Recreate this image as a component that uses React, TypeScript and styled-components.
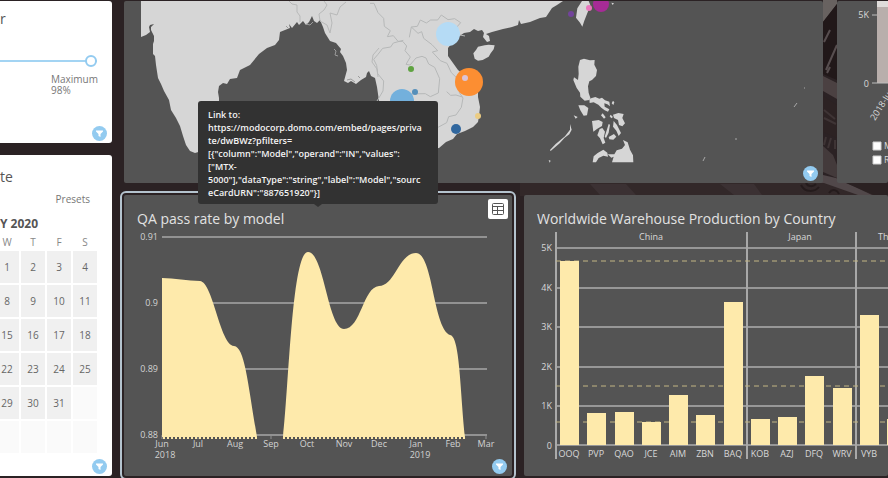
import React from "react";
import styled, { createGlobalStyle } from "styled-components";

const FONT = '"Open Sans", "Noto Sans", sans-serif';
const CREAM = "#feeaab";
const SLATE = "#545454";
const SKY = "#93cbf0";

const GlobalStyle = createGlobalStyle`
  *, *::before, *::after { box-sizing: border-box; }
  body { margin: 0; background: #2b2224; font-family: ${FONT}; overflow: hidden; }
`;

const Page = styled.main`
  position: relative;
  display: flex;
  gap: 12px;
  min-height: 100vh;
  padding: 1px 0 2px;
  background: #2b2224;
`;

const Backdrop = styled.svg`
  position: absolute;
  inset: 0;
  width: 100%;
  height: 100%;
`;

const Sidebar = styled.aside`
  position: relative;
  display: flex;
  flex-direction: column;
  gap: 12px;
  flex: 0 0 112px;
  overflow: hidden;
`;

const Board = styled.div`
  position: relative;
  display: flex;
  flex-direction: column;
  gap: 12px;
  flex: 1;
  min-width: 0;
`;

const Row = styled.div<{ $gap: number }>`
  display: flex;
  gap: ${(p) => p.$gap}px;
  align-items: flex-start;
`;

const Panel = styled.section<{ $grow: number; $selected?: boolean }>`
  position: relative;
  flex: ${(p) => p.$grow} 1 0;
  min-width: 0;
  background: ${SLATE};
  border-radius: 2px;
  outline: ${(p) => (p.$selected ? "2px solid #b4c3ce" : "none")};
  outline-offset: 2px;
`;

const PanelTitle = styled.h2`
  margin: 0;
  padding: 13px 0 0 13px;
  font-size: 14px;
  line-height: 22px;
  font-weight: 400;
  color: #e2e2e2;
  white-space: nowrap;
`;

const Chart = styled.svg`
  display: block;
  width: 100%;
  height: auto;
  font-family: ${FONT};
`;

const FilterCard = styled.section<{ $fill?: boolean }>`
  position: relative;
  flex: ${(p) => (p.$fill ? "1 0 auto" : "0 0 auto")};
  background: #fff;
  border-radius: 0 3px 3px 0;
  padding: ${(p) => (p.$fill ? "12px 15px 19px 0" : "8px 15px 47px 0")};
`;

const FilterTitle = styled.h2`
  margin: 0;
  font-size: 14px;
  line-height: 20px;
  font-weight: 400;
  color: #555;
`;

const Range = styled.input`
  appearance: none;
  display: block;
  width: 100%;
  height: 12px;
  margin: 26px 0 0;
  background: linear-gradient(#a3d4f3, #a3d4f3) center / 100% 2px no-repeat;
  &::-webkit-slider-thumb {
    appearance: none;
    width: 12px;
    height: 12px;
    border: 2px solid #93cbf0;
    border-radius: 50%;
    background: #fff;
  }
`;

const RangeLabel = styled.label`
  display: block;
  width: 46px;
  margin: 7px 0 0 51px;
  font-size: 10px;
  line-height: 11px;
  color: #777;
`;

const Presets = styled.button`
  display: block;
  margin: 5px 7px 0 auto;
  padding: 0;
  border: 0;
  background: none;
  font: 10px/14px ${FONT};
  color: #777;
`;

const CalendarWrap = styled.div`
  display: flex;
  justify-content: flex-end;
  margin-right: -2px;
`;

const Calendar = styled.table`
  flex: none;
  width: 106px;
  table-layout: fixed;
  border-collapse: separate;
  border-spacing: 2px;
  font-size: 10px;
  text-align: center;
  color: #666;
  caption {
    padding: 10px 0 0 7px;
    text-align: left;
    font-size: 12px;
    line-height: 16px;
    font-weight: 700;
    color: #555;
  }
  th {
    height: 15px;
    padding: 0;
    font-weight: 400;
    color: #888;
  }
`;

const Day = styled.td<{ $empty: boolean }>`
  height: 32px;
  padding: 0;
  background: ${(p) => (p.$empty ? "#fafafa" : "#f0f0f0")};
`;

const FunnelButton = styled.button`
  position: absolute;
  right: 5px;
  bottom: 2px;
  display: grid;
  place-items: center;
  width: 15px;
  height: 15px;
  padding: 0;
  border: 0;
  border-radius: 50%;
  background: ${SKY};
`;

const TableButton = styled.button`
  position: absolute;
  top: 4px;
  right: 4px;
  display: grid;
  place-items: center;
  width: 20px;
  height: 20px;
  padding: 0;
  border: 0;
  border-radius: 2px;
  background: #fff;
`;

const Tooltip = styled.div`
  position: absolute;
  z-index: 2;
  left: 50%;
  bottom: calc(100% - 9px);
  width: 240px;
  padding: 7px 10px 5px;
  transform: translateX(-50%);
  background: #323232;
  border-radius: 3px;
  color: #f4f4f4;
  font-size: 9px;
  line-height: 13px;
  font-weight: 600;
  white-space: nowrap;
  &::after {
    content: "";
    position: absolute;
    top: 100%;
    left: 50%;
    margin-left: -4px;
    border: 4px solid transparent;
    border-top: 3px solid #323232;
    border-bottom: 0;
  }
`;

const Funnel = () => (
  <FunnelButton aria-label="Filter">
    <svg width="9" height="9" viewBox="0 0 9 9" fill="#fff">
      <path d="M1 1.5h7v1L5.5 5v3l-2-1V5L1 2.500z" />
    </svg>
  </FunnelButton>
);

const weeks: (number | null)[][] = [
  [1, 2, 3, 4],
  [8, 9, 10, 11],
  [15, 16, 17, 18],
  [22, 23, 24, 25],
  [29, 30, 31, null],
  [null, null, null, null],
];

const DateFilter = () => (
  <FilterCard $fill>
    <FilterTitle>te</FilterTitle>
    <Presets>Presets</Presets>
    <CalendarWrap>
      <Calendar>
        <caption>Y 2020</caption>
        <thead>
          <tr>
            {["W", "T", "F", "S"].map((d) => (
              <th key={d} scope="col">{d}</th>
            ))}
          </tr>
        </thead>
        <tbody>
          {weeks.map((week, i) => (
            <tr key={i}>
              {week.map((day, j) => (
                <Day key={j} $empty={day === null}>{day}</Day>
              ))}
            </tr>
          ))}
        </tbody>
      </Calendar>
    </CalendarWrap>
    <Funnel />
  </FilterCard>
);

const BackdropArt = () => (
  <Backdrop viewBox="0 0 888 478" preserveAspectRatio="xMaxYMin slice" aria-hidden="true">
    <path d="M520 183h368v13H520z" fill="#322829" />
    <path d="M823 0h14v4l-14 18z" fill="#686260" />
    <path d="M823 22l14-18v76l-14-6z" fill="#211819" />
    <path d="M824 42l6-12M826 70l11-25M827 73l3-6" stroke="#574e4f" strokeWidth="2" fill="none" />
    <path d="M823 76l14 7v16l-14-8z" fill="#4b4142" />
    <path d="M823 96l14 9v33l-14-6z" fill="#2c2223" />
    <path d="M824 110l11 9M824 118l12 6M826 137l-2 8M831 138l-3 10M835 140v9" stroke="#3e3435" strokeWidth="2" />
    <path d="M823 146l10 9 4 10v13l-14-6z" fill="#433a3b" />
    <path d="M780 183h44l34 12h14l-36-17-13-3z" fill="#51484a" />
    <path d="M801 185c4 8 14 7 18 2M806 183c2 4 7 4 10 1M829 193c3-4 8-4 10 1" stroke="#241b1c" strokeWidth="2" fill="none" />
    <path d="M846 183h42v12h-14z" fill="#2a2122" />
    <path d="M720 184l14 11h28l-8-11zM590 184l10 11h36l-10-11z" fill="#3b3133" />
  </Backdrop>
);

const MapView = () => (
  <Chart viewBox="124 1 699 182" role="img" aria-label="Map of South East Asia">
    <path
      fill="#d6d6d6"
      d="M141 1V37L146 35 150 32 149 27 150 25 154 24 151 27 151 30 154 36 154 41 153 44 153 54 155 56 156 65 158 78 161 84 164 91 169 100 171 110 176 118 180 126 183 136 186 145 190 151 195 153 205 150 219 110 219 98 218 92 219 86 223 83 227 84 230 79 237 78 240 70 250 65 259 54 267 48 275 45 279 40 280 32 285 30 290 28 289 24 292 28 297 22 299 25 303 21 306 25 309 22 312 16 314 21 317 23 320 20 323 27 325 33 330 41 336 43 341 49 340 52 343 56 346 63 347 70 344 81 348 83 351 81 356 84 361 80 366 77 367 73 369 71 371 76 375 78 377 87 379 101 388 130 420 150 439 148 446 142 453 139 457 134 465 131 473 127 478 122 479 116 480 107 478 97 478 88 470 80 458 70 453 63 448 56 448 48 452 43 458 37 464 33 470 32 474 29 478 31 482 30 484 33 483 37 487 42 490 41 489 36 486 34 492 32 503 29 512 27 518 25 519 20 521 24 530 22 540 18 546 17 552 8 557 5 563 1Z"
    />
    <g transform="translate(370 0) scale(.3333333)">
      <g fill="#d6d6d6">
        <path d="M310 160l8-10 6-10 20-4 12-2 18 2-3 12-9 12-6 10-18 10-14 2-10-6z" />
        <path d="M636 3h20l5 12-8 22-10 25-6 18-7-12-12-15 4-28z" />
        <path d="M630 180l12-4 18 5 14-1-1 14 8 16-3 18-12 12-8 4-4 15 2 20 5 14-3 7-14 2-13-12-1-12-10-14-10-24 2-8 12 8 2-18-1-22z" />
        <path d="M625 316l18 0 12 8-4 22-10 1-10-16zM658 296l18-5 12 5 8-3 9 8 13 4 2 14-8-6-9-3 1 10 14 8-4 7-10-4-10-8-9-9-14-7-12 2z" />
        <path d="M729 344l16-5 16 3-4 12 8 16-8 9-10-4-3-15-12-6zM666 363l20-3 12 6-2 12-14 8-12 9zM682 406l7-19 8-3 8 11-4 19 5 14-8 5-8-18zM704 410l12-38 4 2-4 24-8 16zM731 363l10 12 12 24-7 9-7-16-10-12zM716 411l16-9 7 8-9 9-12-1zM729 302l4 5-3 8-5-5zM698 340l9 12-5 4-9-10zM722 344l7 7-5 4-5-6z" />
        <path d="M668 487l3-18 12-10 17-10 12 9 2 12-14-3-14 7-8 13zM713 463l20 0 7-12 16-5 9-11-6-15 14 7 7 22 9 17 1 21-64 0 5-17-7 3z" />
        <path d="M540 450l17-18 28-23 15-20 0-17 5 17-7 14-14 10-15 17-27 23zM611 346l12 5-6 5zM536 480l6 2-3 6zM724 8l8 2-4 5z" />
      </g>
      <g fill="none" stroke="#b6b8b8" strokeWidth="3" strokeLinejoin="round">
        <path d="M0 10l12 0 12 28 17 17 2 24 18 13-9 18 18-3 14 17 14 0 12 14-5 14 16 19-13 22 12 2 18-21 18-5 12 5 8 18 18 10 15 34-4 43-24 11-15-9-54 1-18 15" />
        <path d="M100 121l-30 8-8 12-24 4-14 18-13 15 9 18 3 25 18 22-2 30-19 32 15 9" />
        <path d="M118 112l6-31 18-2 9-19 18 9 13-9 21 0 11-15 20 14 20-3 18 12-14 16 2 19 25 5" />
        <path d="M124 81l20 19 11-5 6 20 25 19 17 18-16 4 24 26 20 8 13 28 25 24 16 20-17 16 11 16-5 28-16 23-22 5-6 18-26 14" />
        <path d="M230 275l12 11 16-1 19 6" />
      </g>
    </g>
    <g fill="none" stroke="#b8b9b9">
      <path d="M289 1l3 3 5 1 0 7 3 4 0 6M324 1l3 4-3 5-5 4 1 7 7 4 3 8 2-10-2-10 7 2 3-8 6-5M379 48l-6 7-1 7 5 7 1 8" />
    </g>
    <path d="M334 49l2 2-1 4 3 1M347 80l4-1 4 3M358 76l2 2M286 26l3 3M306 24l4 1 3-3" fill="none" stroke="#9b9b9b" />
    <circle cx="448" cy="34" r="12" fill="#b5dbf5" />
    <circle cx="469" cy="82" r="14" fill="#fc8e32" />
    <circle cx="465" cy="78" r="3" fill="#dcc3d5" />
    <circle cx="402" cy="101" r="12" fill="#73b0dc" />
    <circle cx="415" cy="92" r="3" fill="#558fba" />
    <circle cx="411" cy="69" r="3" fill="#5fa341" />
    <circle cx="478" cy="116" r="3" fill="#ebcc83" />
    <circle cx="456" cy="129" r="5" fill="#31679e" />
    <circle cx="571" cy="14" r="3" fill="#72439b" />
    <circle cx="601" cy="4" r="8" fill="#a62b96" />
    <circle cx="589" cy="8" r="3" fill="#ea77bd" />
    <path d="M794 107l3-4M703 161l2-4M804 88h1M735 139h2" stroke="#a9a9a9" strokeWidth="1" />
  </Chart>
);

const SideChart = () => (
  <Chart viewBox="837 1 51 182" role="img" aria-label="Production since June 2018">
    <path d="M877 1h11v82h-11z" fill="#b9afac" />
    <path d="M877 1h11v6h-11z" fill="#dfdcda" />
    <path d="M872 15h5M872 83h16" stroke="#bdbdbd" />
    <g fill="#d8d8d8" fontSize="9">
      <text x="869" y="18" textAnchor="end">5K</text>
      <text x="869" y="87" textAnchor="end">0</text>
      <text transform="translate(875 121) rotate(-58)">2018-Jun</text>
      <text x="884" y="149">M</text>
      <text x="884" y="163">R</text>
    </g>
    <path d="M873 142h8v8h-8zM873 156h8v8h-8z" fill="#fff" stroke="#d0d0d0" />
  </Chart>
);

const months = ["Jun", "Jul", "Aug", "Sep", "Oct", "Nov", "Dec", "Jan", "Feb", "Mar"];
const monthX = [162, 198, 235, 271, 307, 344, 379, 416, 453, 486];

const PassRateChart = () => (
  <Chart viewBox="124 230 388 246" role="img" aria-label="QA pass rate by month">
    <g stroke="#929292" strokeWidth="2">
      {[237, 303, 369, 435].map((y) => (
        <path key={y} d={`M162 ${y}H487`} />
      ))}
      {monthX.map((x) => (
        <path key={x} d={`M${x} 435v4`} strokeWidth="1" />
      ))}
    </g>
    <g fill={CREAM}>
      <path d="M162 278C174 278 188 281 200 281 213 282 220 345 234 346 245 347 248 385 257 437H162Z" />
      <path d="M283 437C289 385 292 252 308 252 324 252 328 329 344 329 361 329 363 287 379 286 395 286 399 253 416 253 433 253 433 328 450 335 460 336 460 390 465 437Z" />
    </g>
    <path d="M163 438h94M283 438h182" stroke={CREAM} strokeWidth="2" strokeDasharray="2 2" />
    <g fill="#d2d2d2" fontSize="9">
      {["0.91", "0.9", "0.89", "0.88"].map((t, i) => (
        <text key={t} x="158" y={240 + i * 66} textAnchor="end">{t}</text>
      ))}
      {months.map((m, i) => (
        <text key={m} x={monthX[i]} y="447" textAnchor="middle">{m}</text>
      ))}
      <text x="165" y="458" textAnchor="middle">2018</text>
      <text x="420" y="458" textAnchor="middle">2019</text>
    </g>
  </Chart>
);

const bars: [string, number][] = [
  ["OOQ", 261], ["PVP", 413], ["QAO", 412], ["JCE", 422], ["AIM", 395],
  ["ZBN", 415], ["BAQ", 302], ["KOB", 419], ["AZJ", 417], ["DFQ", 376],
  ["WRV", 388], ["VYB", 315], ["", 419],
];
const barX = (i: number) => 560 + Math.round(i * 27.25);

const WarehouseChart = () => (
  <Chart viewBox="524 230 364 246" role="img" aria-label="Production by warehouse">
    <g stroke="#979797" strokeWidth="2">
      {[248, 288, 327, 367, 406, 445].map((y) => (
        <path key={y} d={`M556 ${y}H888`} />
      ))}
      <path d="M556 232V459" stroke="#aaa" />
      <path d="M747 232V459M856 232V459" stroke="#a8a8a8" />
    </g>
    <path d="M556 261H888M556 386H888M556 422H888" stroke="#c2b583" strokeWidth="1" strokeDasharray="5 4" />
    <g fill={CREAM}>
      {bars.map(([name, top], i) => (
        <rect key={name} x={barX(i)} y={top} width="19" height={445 - top} />
      ))}
    </g>
    <g fill="#d8d8d8" fontSize="9" textAnchor="middle">
      {bars.map(([name], i) => (
        <text key={name} x={barX(i) + 9} y="457">{name}</text>
      ))}
      <text x="651" y="240">China</text>
      <text x="800" y="240">Japan</text>
      <text x="878" y="240" textAnchor="start">Th</text>
      {["5K", "4K", "3K", "2K", "1K", "0"].map((t, i) => (
        <text key={t} x="552" y={Math.round(251 + i * 39.5)} textAnchor="end">{t}</text>
      ))}
    </g>
  </Chart>
);

export default function App() {
  return (
    <>
      <GlobalStyle />
      <Page>
        <BackdropArt />
        <Sidebar>
          <FilterCard>
            <FilterTitle>r</FilterTitle>
            <Range id="maximum" type="range" min={0} max={98} defaultValue={98} />
            <RangeLabel htmlFor="maximum">Maximum 98%</RangeLabel>
            <Funnel />
          </FilterCard>
          <DateFilter />
        </Sidebar>
        <Board>
          <Row $gap={14}>
            <Panel $grow={699}>
              <MapView />
              <Funnel />
            </Panel>
            <Panel $grow={51}>
              <SideChart />
            </Panel>
          </Row>
          <Row $gap={12}>
            <Panel $grow={388} $selected>
              <PanelTitle>QA pass rate by model</PanelTitle>
              <PassRateChart />
              <TableButton aria-label="Show data table">
                <svg width="12" height="12" viewBox="0 0 12 12" fill="none" stroke="#555">
                  <rect x=".5" y=".5" width="11" height="11" rx="1" />
                  <path d="M1 3.500h10M1 7.500h10M5.500 4v7" />
                </svg>
              </TableButton>
              <Funnel />
              <Tooltip role="tooltip">
                Link to:
                <br />
                https://modocorp.domo.com/embed/pages/priva
                <br />
                te/dwBWz?pfilters=
                <br />
                {'[{"column":"Model","operand":"IN","values":'}
                <br />
                {'["MTX-'}
                <br />
                {'5000"],"dataType":"string","label":"Model","sourc'}
                <br />
                {'eCardURN":"887651920"}]'}
              </Tooltip>
            </Panel>
            <Panel $grow={364}>
              <PanelTitle>Worldwide Warehouse Production by Country</PanelTitle>
              <WarehouseChart />
            </Panel>
          </Row>
        </Board>
      </Page>
    </>
  );
}
